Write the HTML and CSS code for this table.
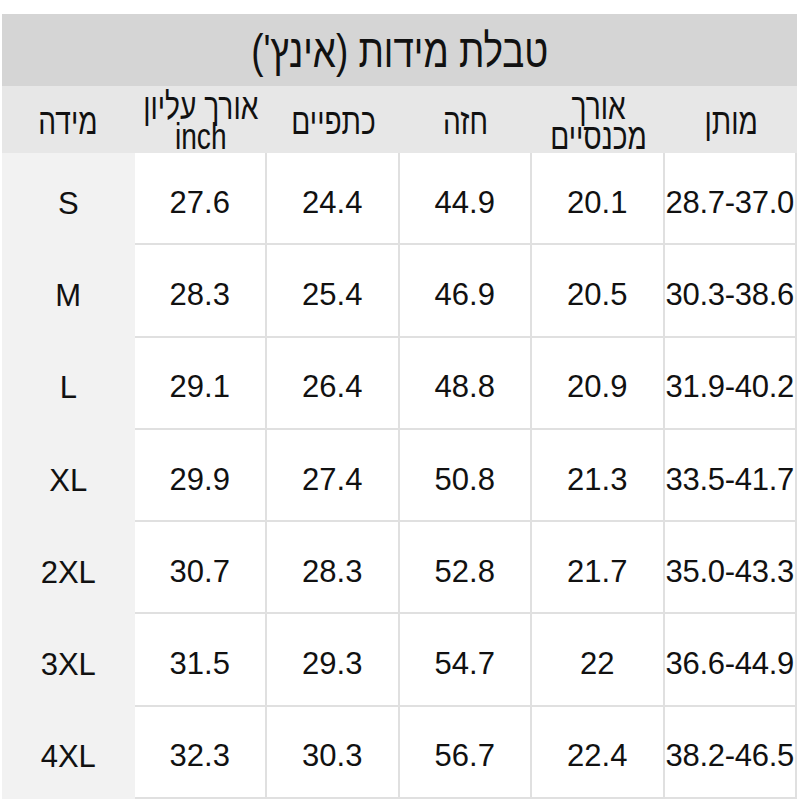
FILE: index.html
```html
<!DOCTYPE html>
<html lang="he">
<head>
<meta charset="utf-8">
<title>טבלת מידות</title>
<link rel="stylesheet" href="styles.css">
</head>
<body>
<div class="sheet">
  <div class="title"><span class="narrow title-text" dir="rtl">טבלת מידות (אינץ')</span></div>
  <div class="grid">
    <div class="hcell"><span class="narrow" dir="rtl">מידה</span></div>
    <div class="hcell"><span class="narrow two" dir="rtl">אורך עליון<br>inch</span></div>
    <div class="hcell"><span class="narrow" dir="rtl">כתפיים</span></div>
    <div class="hcell"><span class="narrow" dir="rtl">חזה</span></div>
    <div class="hcell"><span class="narrow two" dir="rtl">אורך<br>מכנסיים</span></div>
    <div class="hcell"><span class="narrow" dir="rtl">מותן</span></div>

    <div class="size">S</div><div class="cell">27.6</div><div class="cell">24.4</div><div class="cell">44.9</div><div class="cell">20.1</div><div class="cell range">28.7-37.0</div>
    <div class="size">M</div><div class="cell">28.3</div><div class="cell">25.4</div><div class="cell">46.9</div><div class="cell">20.5</div><div class="cell range">30.3-38.6</div>
    <div class="size">L</div><div class="cell">29.1</div><div class="cell">26.4</div><div class="cell">48.8</div><div class="cell">20.9</div><div class="cell range">31.9-40.2</div>
    <div class="size">XL</div><div class="cell">29.9</div><div class="cell">27.4</div><div class="cell">50.8</div><div class="cell">21.3</div><div class="cell range">33.5-41.7</div>
    <div class="size">2XL</div><div class="cell">30.7</div><div class="cell">28.3</div><div class="cell">52.8</div><div class="cell">21.7</div><div class="cell range">35.0-43.3</div>
    <div class="size">3XL</div><div class="cell">31.5</div><div class="cell">29.3</div><div class="cell">54.7</div><div class="cell">22</div><div class="cell range">36.6-44.9</div>
    <div class="size">4XL</div><div class="cell">32.3</div><div class="cell">30.3</div><div class="cell">56.7</div><div class="cell">22.4</div><div class="cell range">38.2-46.5</div>
  </div>
</div>
</body>
</html>
```

FILE: styles.css
```css
html, body {
  margin: 0;
  padding: 0;
  background: #ffffff;
}

body {
  font-family: "Liberation Sans", Arial, sans-serif;
  color: #111111;
}

.sheet {
  padding: 14px 3px 0 2px;
}

.title {
  height: 72px;
  background: #d5d5d5;
  display: flex;
  align-items: center;
  justify-content: center;
}

.narrow {
  display: inline-block;
  transform: scaleX(0.76);
  white-space: nowrap;
  text-align: center;
}

.title-text {
  font-size: 46px;
  line-height: 1;
  transform: scaleX(0.8);
  padding-top: 2px;
}

.grid {
  display: grid;
  grid-template-columns: repeat(6, minmax(0, 1fr));
  grid-template-rows: 67px repeat(7, 92.3px);
}

.hcell {
  background: #e7e7e7;
  display: flex;
  align-items: center;
  justify-content: center;
  font-size: 37px;
  line-height: 30px;
  padding-top: 4px;
}

.size {
  background: #f2f2f2;
  display: flex;
  align-items: center;
  justify-content: center;
  font-size: 31px;
  padding-top: 9px;
}

.cell {
  background: #ffffff;
  border-right: 2px solid #e0e0e0;
  border-bottom: 2px solid #e0e0e0;
  display: flex;
  align-items: center;
  justify-content: center;
  font-size: 31px;
  padding-top: 9px;
}

.range {
  letter-spacing: -0.3px;
  white-space: nowrap;
}
```
